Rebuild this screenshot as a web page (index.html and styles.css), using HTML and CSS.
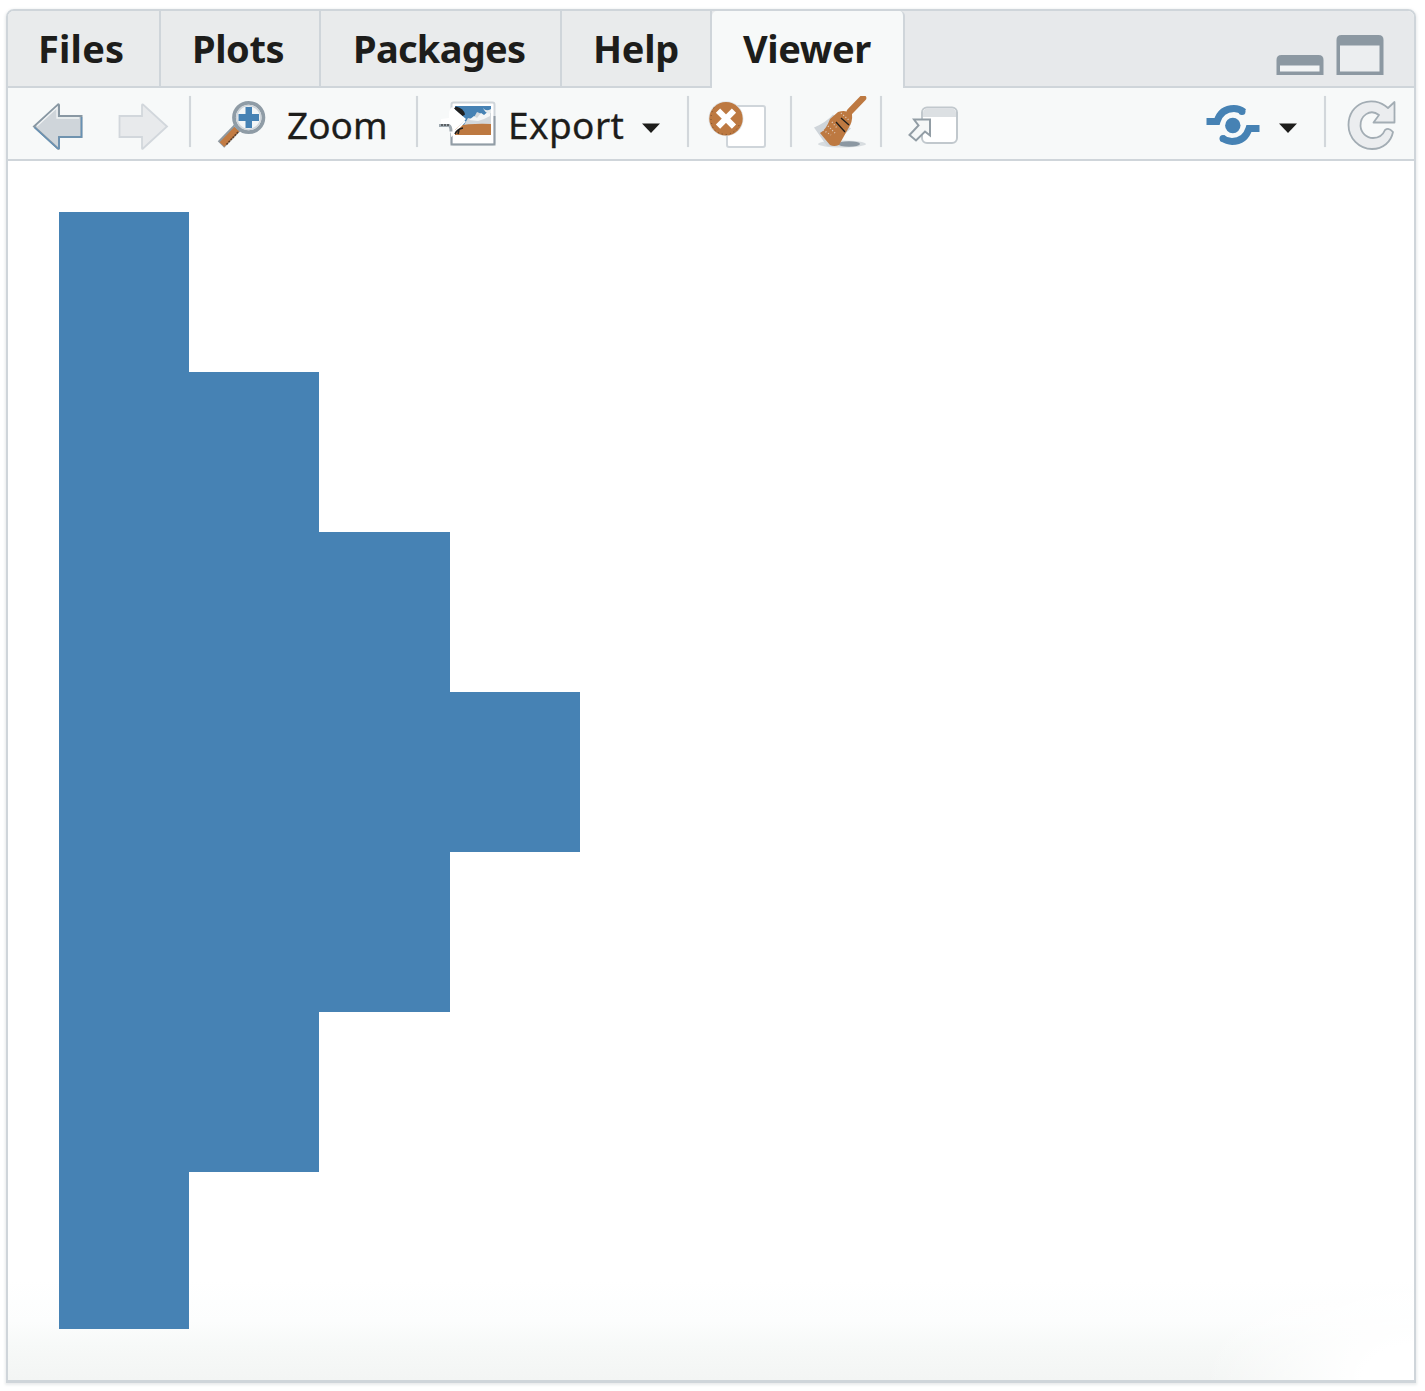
FILE: index.html
```html
<!DOCTYPE html>
<html lang="en">
<head>
<meta charset="utf-8">
<title>Viewer</title>
<link rel="stylesheet" href="styles.css">
</head>
<body>
<main class="pane">
  <header class="tabs">
    <div class="tab tab-files"><span>Files</span></div>
    <div class="tab tab-plots"><span>Plots</span></div>
    <div class="tab tab-packages"><span>Packages</span></div>
    <div class="tab tab-help"><span>Help</span></div>
    <div class="tab tab-viewer active"><span>Viewer</span></div>
    <div class="window-controls">
      <svg width="48" height="42" viewBox="1276 34 48 42"><path d="M1276.500 75V60q0-5 5-5h37q5 0 5 5v15z" fill="#8c98a2"/><path d="M1280 65.500h39.500v6H1280z" fill="#f2f4f5"/></svg>
      <svg width="48" height="42" viewBox="1336 34 48 42"><path d="M1336.500 75V40q0-5 5-5h37q5 0 5 5v35z" fill="#8c98a2"/><path d="M1340 45.500h39.500v26H1340z" fill="#eceef0"/></svg>
    </div>
  </header>
  <nav class="toolbar">
    <svg class="back" width="52" height="56" viewBox="32 96 52 56"><path d="M34 126.500 58 104.500q1-.5 1 1V116h22.500v21H59v11q0 1.500-1 .5z" fill="#cfd5da" stroke="#8998a3" stroke-width="2"/><path d="M59 149v-12h22.500v-20M34.500 127.500 58 149" fill="none" stroke="#6791b4" stroke-width="1.500"/><path d="m37 126 20-18.500V118h22" fill="none" stroke="#f0f3f4" stroke-width="1.300"/></svg>
    <svg class="forward" width="52" height="56" viewBox="117 96 52 56"><path d="m167 126.500-24-22q-1-.5-1 1V116h-22.500v21H142v11q0 1.500 1 .5z" fill="#e8eaec" stroke="#d2d7dc" stroke-width="1.800"/></svg>
    <i class="separator"></i>
    <svg class="zoom-icon" width="50" height="56" viewBox="217 96 50 56"><path d="m239 126-18 18.500" stroke="#8f989f" stroke-width="9"/><path d="m237 129-15 15.500" stroke="#c27b42" stroke-width="6.500"/><path d="m238 132-12 13" stroke="#5d3c25" stroke-width="1.500" stroke-dasharray="2 1"/><path d="m240 124-4 4" stroke="#a8bdcd" stroke-width="6"/><circle cx="248.700" cy="117.500" r="14.700" fill="#f3f6f7" stroke="#8f9ca6" stroke-width="3.800"/><circle cx="248.700" cy="117.500" r="12" fill="none" stroke="#cfd5da" stroke-width="1.600"/><path d="M245.500 107h6.500v7h7v7h-7v7h-6.500v-7H238.500v-7h7z" fill="#4682b4"/></svg>
    <span class="label zoom-label">Zoom</span>
    <i class="separator"></i>
    <svg class="export-icon" width="59" height="56" viewBox="438 96 59 56"><rect x="451.500" y="102.500" width="43" height="42" rx="2" fill="#fff" stroke="#cfd5da" stroke-width="2"/><path d="M451.500 133v11.500h43V116" fill="none" stroke="#929da6" stroke-width="2"/><path d="M455 106h36v20h-36z" fill="#4682b4"/><path d="m464 125 4-7 5 1 4-7 5 2 2 4 4-5 3-1v13z" fill="#d3d8dc"/><path d="m469 120 5-4 3 2 4-5 3 2 6-5v6l-6 3-6 2z" fill="#f3f5f6"/><path d="M483 108q3 4 8 1v4q-5 2-8-5" fill="#e7ebed"/><path d="M455 126q18-3 36-2v11h-36z" fill="#bd7941"/><path d="M456 106.500q8 2 9 8l-3 2-8-8z" fill="#202020"/><path d="M449 118q-1-8 3-11l14 12-14 14-1-1v-7l-10 1v-7z" fill="#fff"/><path d="m451.500 130 .5 5 13-14" fill="none" stroke="#fff" stroke-width="2"/><path d="M439 125.500h10q2 1 2 6" fill="none" stroke="#a0aab1" stroke-width="3"/><path d="M441 125h8" stroke="#46494b" stroke-width="1.500" stroke-dasharray="2 1"/><path d="M455 134q2-5 8-6m-5 6 1-4" fill="none" stroke="#202020" stroke-width="1.600"/></svg>
    <span class="label export-label">Export</span>
    <svg class="caret" width="18" height="56" viewBox="642 96 18 56"><path d="M642 123.500h18L651 133z" fill="#1d1d1b"/></svg>
    <i class="separator"></i>
    <svg class="remove-icon" width="59" height="56" viewBox="708 96 59 56"><rect x="727" y="106" width="38" height="41" rx="2" fill="#fff" stroke="#cfd5da" stroke-width="2"/><circle cx="726" cy="118.700" r="17.500" fill="#e0e3e5"/><circle cx="726" cy="118.700" r="16.700" fill="#bd7941"/><path d="m718 110.700 16 16m0-16-16 16" stroke="#fff" stroke-width="6"/><path d="M714 107.500q-6 11 0 22 5 5 13 5 10-2 13-12" fill="none" stroke="#754d2f" stroke-width="1" stroke-dasharray="1 3"/></svg>
    <i class="separator"></i>
    <svg class="broom-icon" width="56" height="56" viewBox="812 96 56 56"><ellipse cx="842" cy="144" rx="24" ry="3.500" fill="#d8dde0"/><ellipse cx="849" cy="144" rx="11" ry="2.700" fill="#8c98a2"/><path d="M814 127.500q12-5 19-13l18 14q-9 7-15 17.500h-9z" fill="#cfd5da"/><path d="M850 111.500 863 98" stroke="#bd7941" stroke-width="6.500" stroke-linecap="round"/><path d="m830 119 8-7q8-3 14 2 1 8-4 15l-9 16q-5 2-9 0l-10-12q6-3 10-14z" fill="#bd7941"/><path d="m836 122 9 10m-4-14 8 7" stroke="#1d1d1b" stroke-width="1.300"/><path d="m841 113 9 8m-27 9 8 5m-3-9 8 8m-4-12 5 6" stroke="#dfcbbc" stroke-width="1.300" stroke-dasharray="1 2"/></svg>
    <i class="separator"></i>
    <svg class="popout-icon" width="54" height="56" viewBox="907 96 54 56"><rect x="922" y="107.500" width="35" height="35.500" rx="5" fill="#fff" stroke="#c1c8cd" stroke-width="2"/><path d="M923 117v-4q0-4.500 5-4.500h23q5 0 5 4.500v4z" fill="#dce0e3"/><path d="M914 119.500h16v16l-5-4-9 9-6.500-5.500 9-9.500z" fill="#f5f7f7" stroke="#929da5" stroke-width="2"/></svg>
    <svg class="publish-icon" width="56" height="56" viewBox="1205 96 56 56"><g fill="none" stroke="#4682b4" stroke-width="7"><path d="M1206.500 121.500h10.500q4-13 17-13 5 0 10 3.500"/><path d="M1259.500 128.500H1249q-4 13-17 13-5 0-10-3.500"/></g><circle cx="1242" cy="111.500" r="3.500" fill="#4682b4"/><circle cx="1223" cy="138.500" r="3.500" fill="#4682b4"/><circle cx="1232.800" cy="125.500" r="7.700" fill="#4682b4"/></svg>
    <svg class="caret publish-caret" width="18" height="56" viewBox="1279 96 18 56"><path d="M1279 123.500h18L1288 133z" fill="#1d1d1b"/></svg>
    <i class="separator"></i>
    <svg class="refresh-icon" width="50" height="56" viewBox="1347 96 50 56"><path d="M1394.500 102v20.500h-21l5.500-7.500c-9-7-19 1-18.500 11 .5 7 6 12 12.500 12 6 0 10-3 12-8q4-3 8 2c-2 10-10 17-21 17-13 0-23.500-11-23.500-24 0-22 24-31 39.500-17z" fill="#ebedef" stroke="#a3adb4" stroke-width="1.800" stroke-linejoin="round"/></svg>
  </nav>
  <section class="viewer">
    <div class="chart">
      <div class="bar" style="width:130px"></div>
      <div class="bar" style="width:260px"></div>
      <div class="bar" style="width:391px"></div>
      <div class="bar" style="width:521px"></div>
      <div class="bar" style="width:391px"></div>
      <div class="bar" style="width:260px"></div>
      <div class="bar" style="width:130px"></div>
    </div>
  </section>
</main>
</body>
</html>
```
FILE: styles.css
```css
* { box-sizing: border-box; }
body {
  margin: 0;
  padding: 9px 0 0 6px;
  height: 1391px;
  overflow: hidden;
  background: #fff;
  color: #1d1d1b;
  font-family: "Noto Sans", sans-serif;
}
svg { display: block; flex: none; }
.pane {
  display: flex;
  flex-direction: column;
  width: 1410px;
  height: 1374px;
  border: 2px solid #cfd5da;
  border-bottom-width: 3px;
  border-radius: 8px 8px 0 0;
  box-shadow: 0 1px 3px 1px #e9ebec;
  overflow: hidden;
}
.tabs { display: flex; flex: none; height: 77px; background: #e7e9eb; }
.tab {
  flex: none;
  padding-top: 11px;
  border-right: 2px solid #cfd5da;
  border-bottom: 2px solid #cfd5da;
  background: #e9ebec;
  font-size: 38px;
  line-height: 52px;
  font-weight: 700;
  white-space: nowrap;
}
.tab-files { width: 153px; padding-left: 30px; letter-spacing: .2px; }
.tab-plots { width: 160px; padding-left: 31px; letter-spacing: -.4px; }
.tab-packages { width: 241px; padding-left: 32px; letter-spacing: -.7px; }
.tab-help { width: 150px; padding-left: 31px; letter-spacing: -.3px; }
.tab-viewer { width: 193px; padding-left: 31px; letter-spacing: -.4px; }
.tab.active { border-bottom: 0; border-radius: 5px 5px 0 0; background: #f7f9f9; }
.window-controls {
  display: flex;
  flex: 1;
  gap: 12px;
  justify-content: flex-end;
  padding: 23px 30px 0 0;
  border-bottom: 2px solid #cfd5da;
}
.toolbar {
  display: flex;
  flex: none;
  align-items: flex-start;
  height: 73px;
  padding: 8px 0 0 24px;
  border-bottom: 2px solid #cfd5da;
  background: #f7f9f9;
}
.separator {
  flex: none;
  width: 2px;
  height: 51px;
  background: #d2d7db;
  box-shadow: 0 0 1px #dfe3e5;
}
.forward { margin-left: 33px; }
.forward + .separator { margin-left: 20px; }
.zoom-icon { margin-left: 26px; }
.label {
  flex: none;
  margin-top: 4px;
  font-size: 37px;
  line-height: 50px;
  white-space: nowrap;
  -webkit-text-stroke: .3px #1d1d1b;
}
.zoom-label { width: 129px; margin-left: 20px; }
.export-icon { margin-left: 20px; }
.export-label { width: 134px; margin-left: 11px; letter-spacing: .4px; }
.caret + .separator { margin-left: 27px; }
.remove-icon { margin-left: 19px; }
.remove-icon + .separator { margin-left: 23px; }
.broom-icon { margin-left: 20px; }
.broom-icon + .separator { margin-left: 12px; }
.popout-icon { margin-left: 25px; }
.publish-icon { margin-left: auto; }
.publish-caret { margin-left: 18px; }
.refresh-icon { margin: 0 17px 0 21px; }
.viewer {
  flex: 1;
  padding: 51px 0 0 51px;
  background:
    radial-gradient(ellipse 210px 140px at 100% 100%, #fff 25%, transparent),
    linear-gradient(to bottom, #fff 1120px, #fcfdfd 1160px, #f7f9f8 1185px, #f3f5f4 100%);
}
.chart { display: grid; grid-template-rows: repeat(6, 160px) 157px; }
.bar { background: #4682b4; }
```
